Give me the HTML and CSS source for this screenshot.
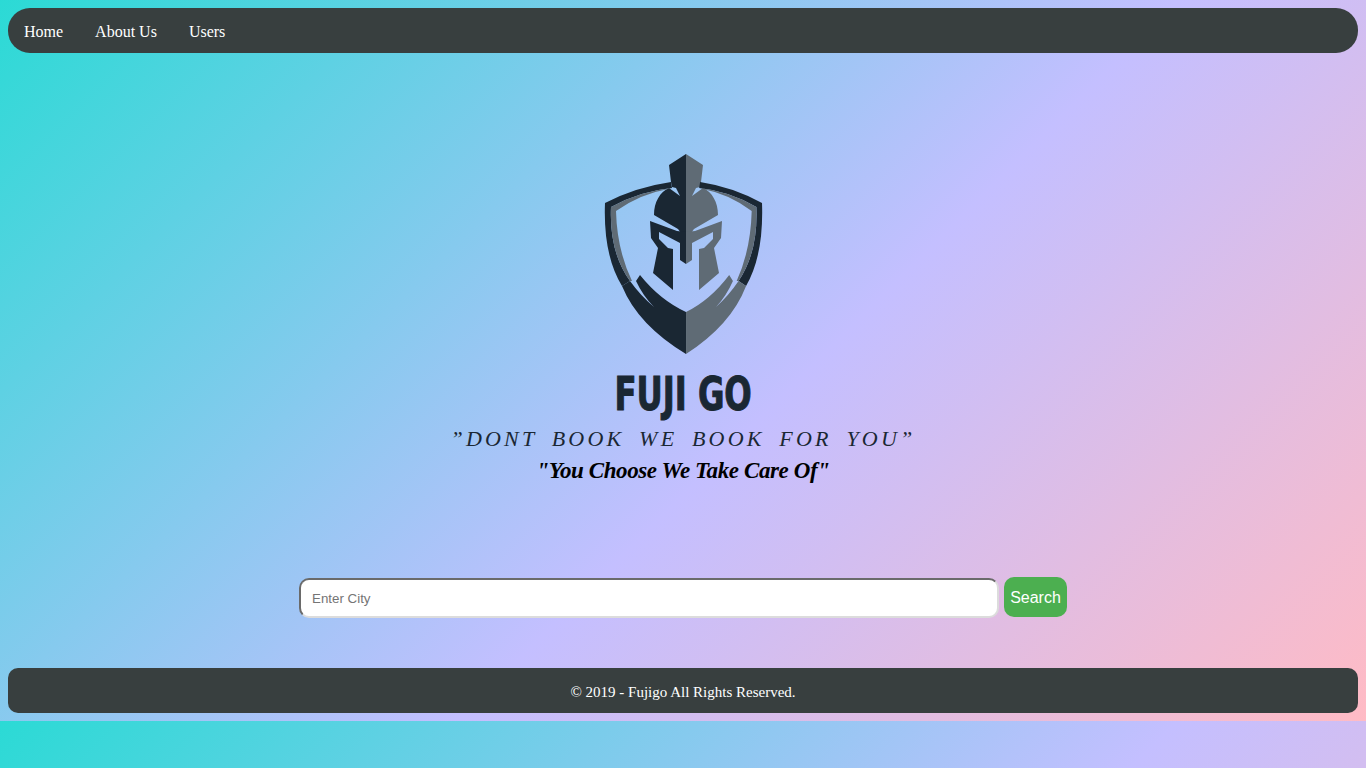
FILE: index.html
```html
<!DOCTYPE html>
<html lang="en">
<head>
<meta charset="utf-8">
<title>Fuji Go</title>
<link rel="stylesheet" href="styles.css">
</head>
<body>
<nav class="nav">
  <a class="nav-link" href="#">Home</a>
  <a class="nav-link" href="#">About Us</a>
  <a class="nav-link" href="#">Users</a>
</nav>
<main class="hero">
  <svg class="logo" viewBox="583 154 200 200" width="200" height="200" aria-label="Fuji Go logo">
    <defs>
      <path id="band" d="M605 203Q636 187 671 182L672 188Q640 191 611 207Q609 252 630 281L622 286Q603 255 605 203Z"/>
      <path id="stripe" d="M611 207Q640 191 672 188L668 189Q640 194 616 211Q617 250 632 281L630 281Q609 252 611 207Z"/>
      <path id="body" d="M622 286L630 281Q640 295 654 307Q643 296 636 281L640 275Q660 300 686 312L686 354Q638 325 622 286Z"/>
      <path id="dome" d="M686 154L669 165L671 182L672 187L676 188L680 196L669 188C660 192 654 202 654 215L678 229L686 240Z"/>
      <path id="mask" d="M650 221L651 238L658 248L653 273L673 290L673 249L668 248L659 239L659 232L680 243L680 260L686 264L686 232L677 231Z"/>
    </defs>
    <g class="dark">
      <use href="#band"/><use href="#body"/><use href="#dome"/><use href="#mask"/>
    </g>
    <g class="grey"><use href="#stripe"/></g>
    <g transform="matrix(-1 0 0 1 1372 0)">
      <g class="grey"><use href="#dome"/><use href="#mask"/></g>
    </g>
    <g transform="matrix(-0.938 0 0 1 1329.5 0)">
      <g class="dark"><use href="#band"/></g>
      <g class="grey"><use href="#stripe"/><use href="#body"/></g>
    </g>
  </svg>
  <h1 class="brand">FUJI GO</h1>
  <p class="motto">”DONT BOOK WE BOOK FOR YOU”</p>
  <p class="slogan">"You Choose We Take Care Of"</p>
</main>
<form class="search">
  <input class="search-input" type="text" placeholder="Enter City">
  <button class="search-btn" type="button">Search</button>
</form>
<footer class="footer">© 2019 - Fujigo All Rights Reserved.</footer>
</body>
</html>
```
FILE: styles.css
```css
body {
  margin: 8px;
  background: linear-gradient(135deg, #2bdad5 0%, #c4bfff 56.5%, #ffbbc5 100%);
  font-family: "Liberation Serif", serif;
  color: #fff;
}
.nav {
  display: flex;
  align-items: center;
  height: 45px;
  padding-top: 2px;
  box-sizing: border-box;
  background: #383f3f;
  border-radius: 22px;
}
.nav-link {
  padding: 0 16px;
  color: #fff;
  font-size: 16px;
  text-decoration: none;
}
.hero {
  display: flex;
  flex-direction: column;
  align-items: center;
  padding-top: 101px;
}
.logo { display: block; }
.dark { fill: #1a2733; }
.grey { fill: #5f6b75; }
.brand {
  margin: 16px 0 0;
  font-family: "DejaVu Sans Condensed", "DejaVu Sans", sans-serif;
  font-size: 46px;
  line-height: 48px;
  font-weight: 700;
  color: #1a2733;
  transform: scaleX(0.78);
  -webkit-text-stroke: 1px #1a2733;
}
.motto {
  margin: 8px 0 0;
  font-size: 22px;
  line-height: 26px;
  font-style: italic;
  letter-spacing: 3.2px;
  word-spacing: 6px;
  color: #1a2733;
}
.slogan {
  margin: 4px 0 0;
  font-size: 23px;
  line-height: 30px;
  font-style: italic;
  font-weight: 700;
  letter-spacing: -0.4px;
  color: #000;
}
.search {
  display: flex;
  justify-content: center;
  align-items: flex-start;
  gap: 5px;
  margin-top: 91px;
}
.search-input {
  box-sizing: border-box;
  width: 700px;
  height: 40px;
  margin-top: 1px;
  padding: 0 11px;
  border: 2px solid;
  border-color: #6a6a6a #dcdcdc #dcdcdc #6a6a6a;
  border-radius: 10px;
  background: #fff;
  font-family: "Liberation Sans", sans-serif;
  font-size: 13.33px;
  outline: none;
}
.search-btn {
  width: 63px;
  height: 40px;
  padding: 2px 0 0;
  border: 0;
  border-radius: 10px;
  background: #4caf50;
  color: #fff;
  font-family: "Liberation Sans", sans-serif;
  font-size: 16px;
}
.footer {
  margin-top: 50px;
  height: 45px;
  line-height: 48px;
  text-align: center;
  font-size: 15px;
  background: #383f3f;
  border-radius: 10px;
}
```
